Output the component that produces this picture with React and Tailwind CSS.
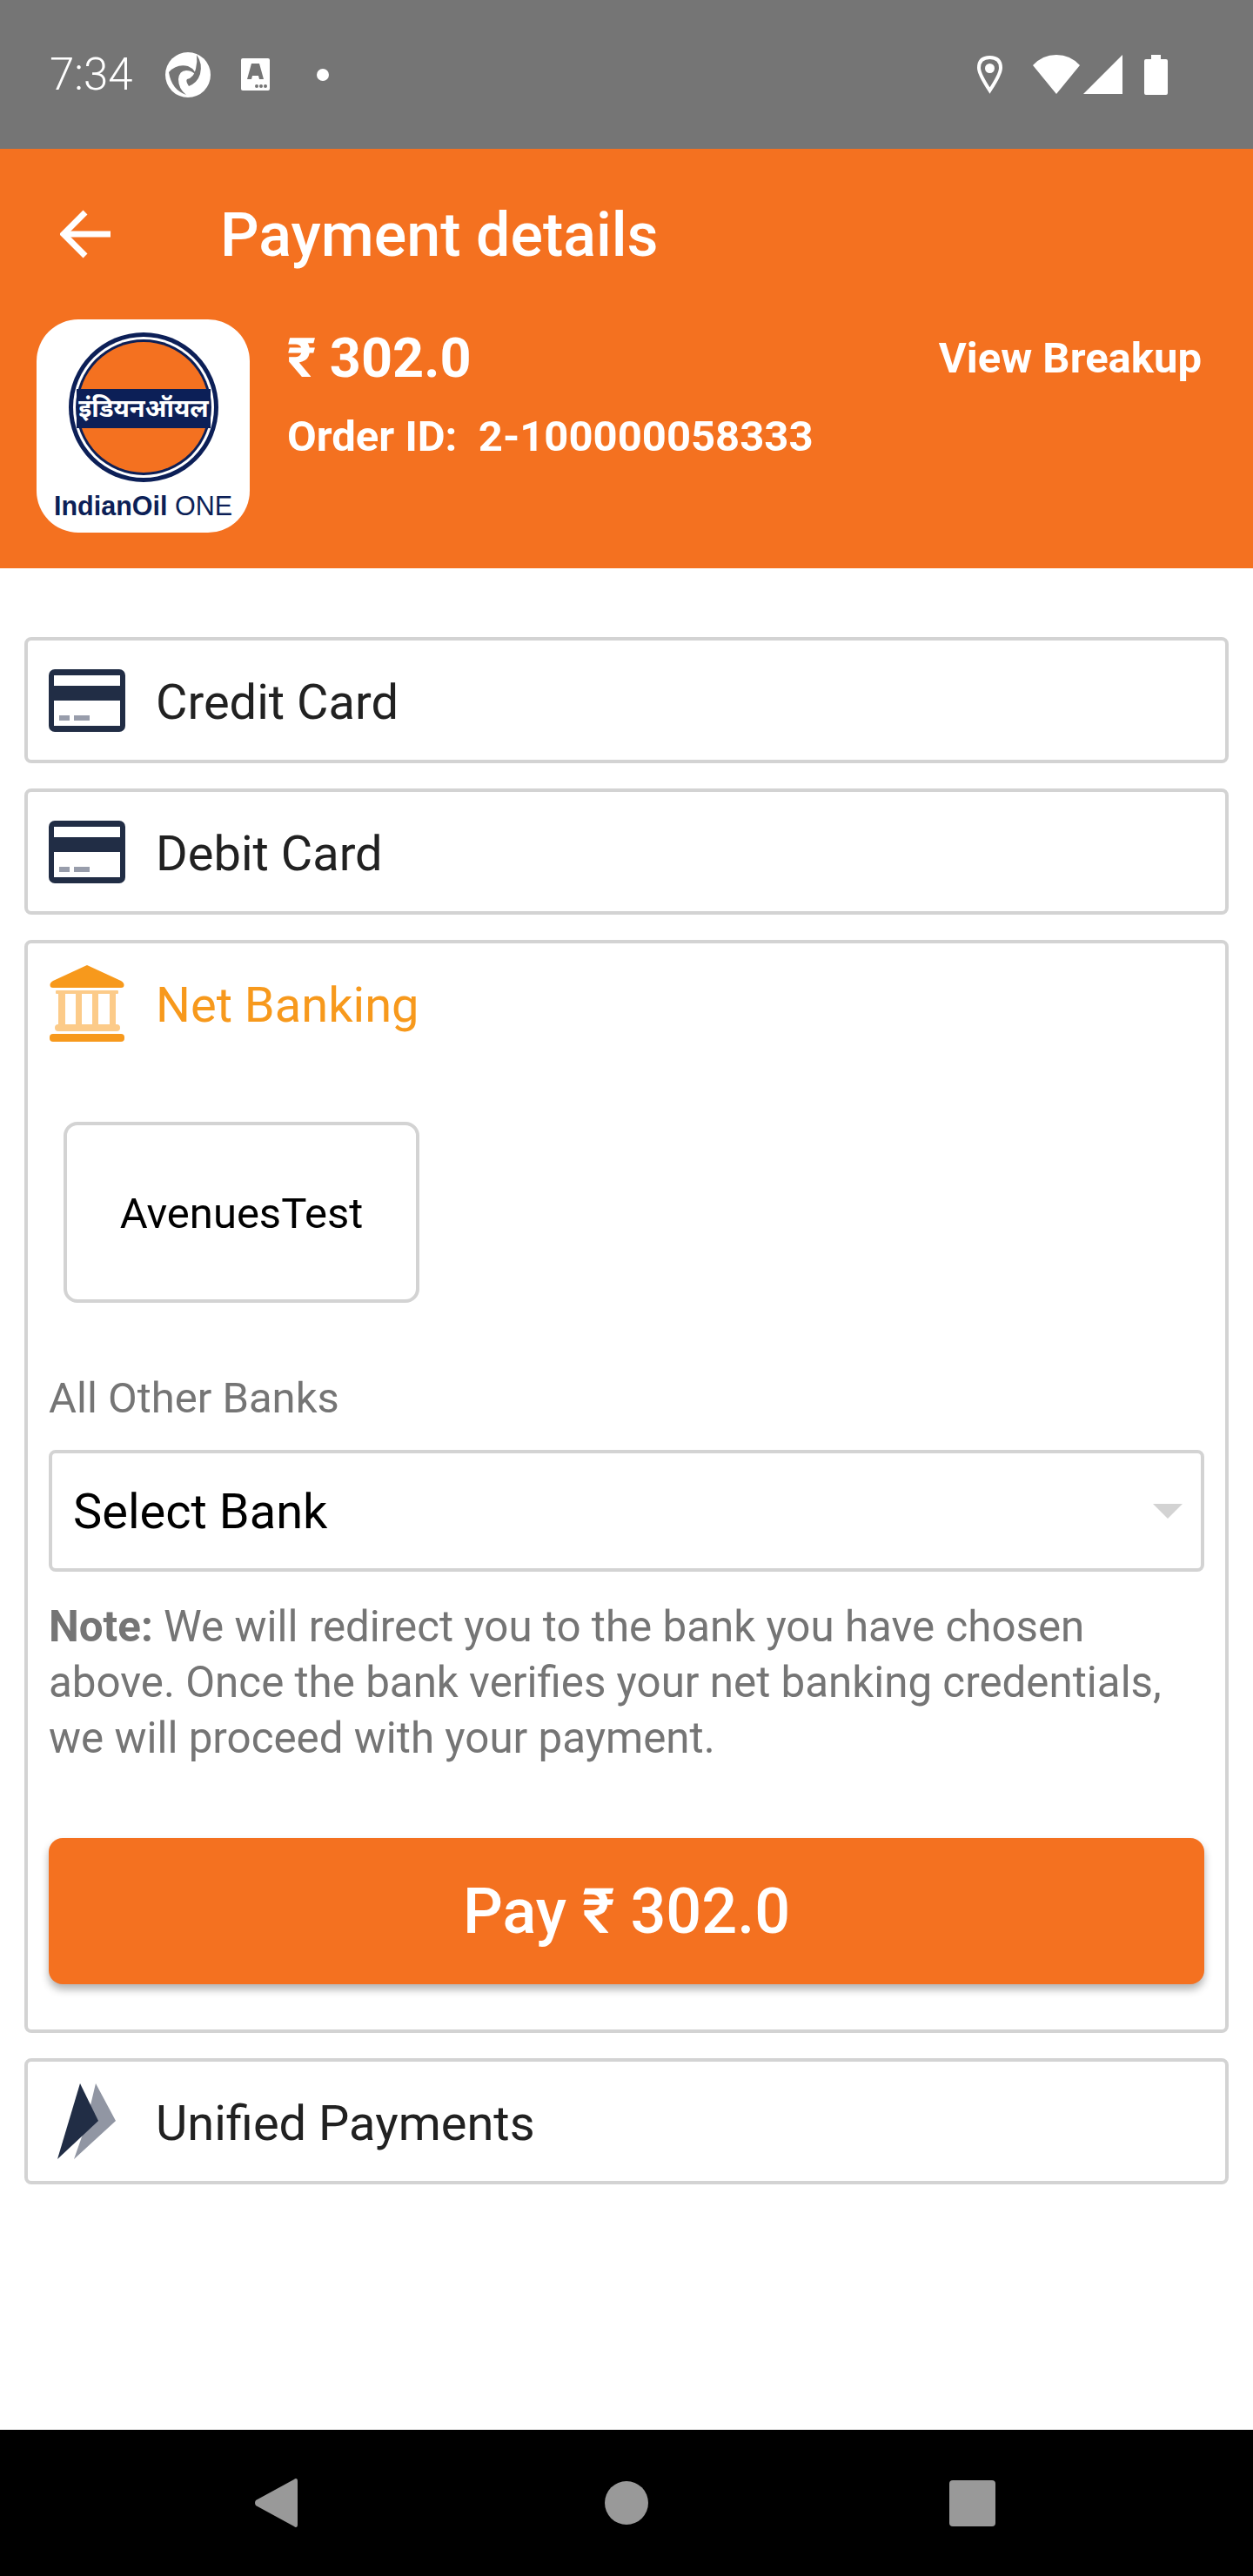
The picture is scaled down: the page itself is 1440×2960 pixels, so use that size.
import React from 'react';

const CardIcon = () => (
  <svg width="88" height="72" viewBox="0 0 88 72" className="shrink-0">
    <rect x="0" y="0" width="88" height="72" rx="7" fill="#212d45" />
    <rect x="6" y="7" width="76" height="12" fill="#fff" />
    <rect x="6" y="36" width="76" height="29" fill="#fff" />
    <rect x="12" y="53" width="12" height="6" fill="#989dab" />
    <rect x="29" y="53" width="18" height="6" fill="#989dab" />
  </svg>
);

const BankIcon = () => (
  <svg width="88" height="88" viewBox="0 0 88 88" className="shrink-0">
    <path d="M44 0 L83 18 Q88 21 86 25 Q85 26 83 26 L5 26 Q3 26 2 25 Q0 21 5 18 Z" fill="#f7991c" />
    <rect x="8" y="29" width="72" height="4" rx="1" fill="#fccb89" />
    <rect x="11" y="33" width="8" height="36" fill="#fccb89" />
    <rect x="31" y="33" width="7" height="36" fill="#fccb89" />
    <rect x="50" y="33" width="7" height="36" fill="#fccb89" />
    <rect x="70" y="33" width="7" height="36" fill="#fccb89" />
    <rect x="7" y="68" width="75" height="8" rx="4" fill="#fccb89" />
    <rect x="1" y="79" width="86" height="9" rx="4" fill="#f7991c" />
  </svg>
);

const UpiIcon = () => (
  <svg width="88" height="88" viewBox="0 0 88 88" className="shrink-0">
    <path d="M54 0 L77 43 L29 87 L42 50 Z" fill="#9196a3" />
    <path d="M36 0 L57 43 L10 87 Z" fill="#212d45" />
  </svg>
);

const IocLogo = () => (
  <div className="w-[245px] h-[245px] shrink-0 bg-white rounded-[48px] flex flex-col items-center pt-[14px]">
    <svg width="174" height="174" viewBox="0 0 174 174" className="shrink-0">
      <circle cx="87" cy="87" r="86" fill="#0c1f57" />
      <circle cx="87" cy="87" r="81" fill="#fff" />
      <circle cx="87" cy="87" r="78" fill="#0c1f57" />
      <circle cx="87" cy="87" r="75" fill="#f47120" />
      <rect x="10" y="66" width="154" height="45" fill="#0c1f57" />
      <text x="87" y="98" textAnchor="middle" fontSize="29" fontWeight="700" fill="#fff" fontFamily="'Noto Sans', 'DejaVu Sans', sans-serif">इंडियनऑयल</text>
    </svg>
    <div className="mt-[9px] text-[30.5px] leading-[34px] text-[#0c1f57] font-['Liberation_Sans',sans-serif] whitespace-nowrap">
      <span className="font-bold">IndianOil</span> ONE
    </div>
  </div>
);

const StatusBar = () => (
  <div className="h-[171px] shrink-0 bg-[#757575] flex items-center justify-between pl-[57px] pr-[98px] text-white">
    <div className="flex items-center">
      <span className="w-[93px] text-[51px] leading-none font-light whitespace-nowrap">7:34</span>
      <svg width="54" height="54" viewBox="0 0 54 54" className="ml-[39px]">
        <ellipse cx="27" cy="27" rx="26" ry="26" fill="#fff" />
        <path d="M5 24 Q14 14 27 17 Q37 21 38 34 Q36 22 25 22 Q17 22 16 32 Q16 43 25 50 Q8 44 5 24 Z" fill="#757575" />
        <path d="M37 4 Q44 14 41 26 Q38 36 28 40 Q24 34 26 32 Q34 30 36 20 Q38 12 37 4 Z" fill="#757575" />
      </svg>
      <svg width="34" height="37" viewBox="0 0 34 37" className="ml-[34px]">
        <rect width="33" height="37" rx="2" fill="#fff" />
        <path d="M12 6 L21 6 L26 24 L21 24 L20 20 L13 20 L12 24 L7 24 Z" fill="#757575" />
        <circle cx="18" cy="32" r="2" fill="#757575" />
        <circle cx="23" cy="32" r="2" fill="#757575" />
        <circle cx="28" cy="32" r="2" fill="#757575" />
      </svg>
      <div className="ml-[53px] w-[14px] h-[14px] rounded-full bg-white" />
    </div>
    <div className="flex items-center">
      <svg width="31" height="45" viewBox="0 0 31 45">
        <path d="M15.5 41 Q3 22 3 15 Q3 3 15.5 3 Q28 3 28 15 Q28 22 15.5 41 Z" fill="none" stroke="#fff" strokeWidth="4" />
        <circle cx="15.5" cy="15.5" r="5.5" fill="#fff" />
      </svg>
      <svg width="54" height="45" viewBox="0 0 54 45" className="ml-[34px]">
        <path d="M0 12 Q11 0 27 0 Q43 0 54 12 L27 45 Z" fill="#fff" />
      </svg>
      <svg width="45" height="45" viewBox="0 0 45 45" className="ml-[4px]">
        <path d="M45 0 L45 45 L0 45 Z" fill="#fff" />
      </svg>
      <svg width="27" height="46" viewBox="0 0 27 46" className="ml-[25px]">
        <path d="M8 0 L19 0 L19 5 L25 5 Q27 5 27 7 L27 44 Q27 46 25 46 L2 46 Q0 46 0 44 L0 7 Q0 5 2 5 L8 5 Z" fill="#fff" />
      </svg>
    </div>
  </div>
);

const Header = () => (
  <div className="h-[482px] shrink-0 bg-[#f47120] text-white flex flex-col">
    <div className="h-[196px] shrink-0 flex items-center">
      <svg width="60" height="56" viewBox="0 0 60 56" className="ml-[69px]" fill="none" stroke="#fff" strokeWidth="7">
        <path d="M58 28 L5 28" />
        <path d="M29 3 L4 28 L29 53" />
      </svg>
      <span className="ml-[124px] pt-[2px] text-[70px] leading-none font-medium">Payment details</span>
    </div>
    <div className="flex pl-[42px]">
      <IocLogo />
      <div className="ml-[43px] flex-1 pr-[59px]">
        <div className="flex items-center justify-between h-[90px] -mt-[1px]">
          <span className="text-[63px] leading-none font-bold">₹ 302.0</span>
          <span className="pt-[1px] text-[49px] leading-none font-bold">View Breakup</span>
        </div>
        <div className="text-[49px] leading-none font-bold mt-[21px] whitespace-pre">Order ID:  2-100000058333</div>
      </div>
    </div>
  </div>
);

const PaymentRow = ({ icon, label, active }) => (
  <div className="h-[137px] flex items-center pl-[24px]">
    {icon}
    <span className={`ml-[35px] pt-[4px] text-[56px] leading-none ${active ? 'text-[#f7991c]' : 'text-[#212121]'}`}>{label}</span>
  </div>
);

const NetBanking = () => (
  <div className="border-4 border-[#d3d3d3] rounded-[8px] pb-[52px]">
    <PaymentRow icon={<BankIcon />} label="Net Banking" active />
    <div className="pl-[41px] pr-[24px] pt-[68px]">
      <div className="w-[409px] h-[208px] border-4 border-[#d3d3d3] rounded-[16px] flex items-center justify-center pt-[4px] text-[49px] text-black">
        AvenuesTest
      </div>
    </div>
    <div className="px-[24px]">
      <div className="mt-[78px] text-[49px] leading-[64px] text-[#757575]">All Other Banks</div>
      <div className="mt-[27px] h-[140px] border-4 border-[#d3d3d3] rounded-[8px] flex items-center justify-between pl-[24px] pr-[21px]">
        <span className="pt-[2px] text-[56px] leading-none text-black">Select Bank</span>
        <div className="w-0 h-0 border-x-[17px] border-x-transparent border-t-[17px] border-t-[#d3d3d3]" />
      </div>
      <p className="mt-[31px] text-[49.3px] leading-[64px] text-[#757575]">
        <span className="font-bold">Note:</span> We will redirect you to the bank you have chosen above. Once the bank verifies your net banking credentials, we will proceed with your payment.
      </p>
      <button className="mt-[83px] w-full h-[168px] bg-[#f47120] rounded-[16px] pt-[2px] text-white text-[72px] font-medium shadow-[0_6px_10px_rgba(0,0,0,0.3)]">
        Pay ₹ 302.0
      </button>
    </div>
  </div>
);

const Box = ({ children }) => (
  <div className="border-4 border-[#d3d3d3] rounded-[8px]">{children}</div>
);

export default function App() {
  return (
    <div className="w-[1440px] h-[2960px] bg-white flex flex-col font-['Roboto',sans-serif]">
      <StatusBar />
      <Header />
      <div className="flex-1 px-[28px] pt-[79px] flex flex-col gap-[29px]">
        <Box><PaymentRow icon={<CardIcon />} label="Credit Card" /></Box>
        <Box><PaymentRow icon={<CardIcon />} label="Debit Card" /></Box>
        <NetBanking />
        <Box><PaymentRow icon={<UpiIcon />} label="Unified Payments" /></Box>
      </div>
      <div className="h-[168px] shrink-0 bg-black flex items-center pl-[293px]">
        <svg width="49" height="56" viewBox="0 0 49 56">
          <path d="M47 0 Q49 0 49 3 L49 53 Q49 56 47 56 Q46 56 45 55 L1 31 Q-1 28 1 25 L45 1 Q46 0 47 0 Z" fill="#999" />
        </svg>
        <div className="ml-[353px] w-[50px] h-[50px] rounded-full bg-[#999]" />
        <div className="ml-[346px] w-[53px] h-[53px] rounded-[4px] bg-[#999]" />
      </div>
    </div>
  );
}
